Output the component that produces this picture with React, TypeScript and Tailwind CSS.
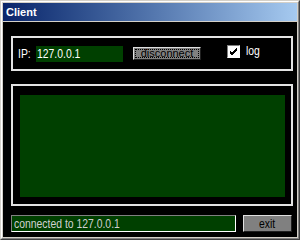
import { useState } from 'react'

const NARROW = "font-['Liberation_Sans',sans-serif] text-[13px] leading-none"

function Squeezed({ children, center }: { children: string; center?: boolean }) {
  return (
    <span className={`inline-block whitespace-nowrap scale-x-[0.8] ${center ? 'origin-center' : 'origin-left'}`}>
      {children}
    </span>
  )
}

function RaisedButton({ label, className, focused, squeeze }: { label: string; className: string; focused?: boolean; squeeze?: boolean }) {
  return (
    <button
      type="button"
      className={`flex items-center justify-center border border-t-[#e0e0e0] border-l-[#e0e0e0] border-r-[#202020] border-b-[#202020] bg-[#808080] p-[1px] text-black ${className}`}
    >
      <span
        className={`flex h-full w-full items-center justify-center leading-none ${focused ? 'border border-dotted border-black' : ''}`}
      >
        {squeeze ? <Squeezed center>{label}</Squeezed> : label}
      </span>
    </button>
  )
}

export default function App() {
  const [log, setLog] = useState(true)

  return (
    <div className="h-[240px] w-[300px] border border-t-[#d4d0c8] border-l-[#d4d0c8] border-r-[#404040] border-b-[#404040] bg-[#d4d0c8]">
      <div className="flex h-full w-full flex-col border border-t-white border-l-white border-r-[#808080] border-b-[#808080] p-[1px]">
        <div className="flex h-[18px] items-center bg-gradient-to-r from-[#0a246a] to-[#a6caf0] pl-[3px] font-['Liberation_Sans',sans-serif] text-[11px] font-bold text-white">
          Client
        </div>
        <div className="mt-[1px] flex flex-1 flex-col bg-black pl-[8px] pr-[4px] pt-[14px] pb-[5px]">
          <section className="flex h-[35px] items-center border-2 border-[#e4e4e4] pl-[5px]">
            <span className={`${NARROW} w-[18px] text-white`}>
              <Squeezed>IP:</Squeezed>
            </span>
            <div className={`${NARROW} flex h-[16px] w-[87px] items-center bg-[#004000] pl-[1px] text-white`}>
              <Squeezed>127.0.0.1</Squeezed>
            </div>
            <RaisedButton
              label="disconnect"
              focused
              className="ml-[10px] h-[13px] w-[68px] font-['Liberation_Sans',sans-serif] text-[11px]"
            />
            <label className="ml-[26px] -mt-[4px] flex cursor-pointer items-center">
              <span
                onClick={() => setLog(!log)}
                className="flex h-[13px] w-[13px] items-center justify-center border border-t-[#808080] border-l-[#808080] border-r-white border-b-white bg-white"
              >
                {log && (
                  <svg width="9" height="9" viewBox="0 0 9 9">
                    <path d="M1 4 L3 6 L8 1 M1 5 L3 7 L8 2 M1 6 L3 8 L8 3" stroke="black" strokeWidth="1" fill="none" />
                  </svg>
                )}
              </span>
              <span className={`${NARROW} ml-[6px] -mt-[3px] text-white`}>
                <Squeezed>log</Squeezed>
              </span>
            </label>
          </section>

          <section className="mt-[13px] h-[122px] border-2 border-[#e4e4e4] pb-[7px] pl-[7px] pr-[6px] pt-[9px]">
            <div className="h-full w-full bg-[#004000]" />
          </section>

          <div className="mt-auto flex h-[17px] items-stretch">
            <div
              className={`${NARROW} flex w-[225px] items-center border border-t-[#808080] border-l-[#808080] border-r-white border-b-white bg-[#004000] pl-[2px] text-[#d0d0d0]`}
            >
              <Squeezed>connected to 127.0.0.1</Squeezed>
            </div>
            <RaisedButton label="exit" squeeze className={`${NARROW} ml-[7px] w-[49px]`} />
          </div>
        </div>
      </div>
    </div>
  )
}
